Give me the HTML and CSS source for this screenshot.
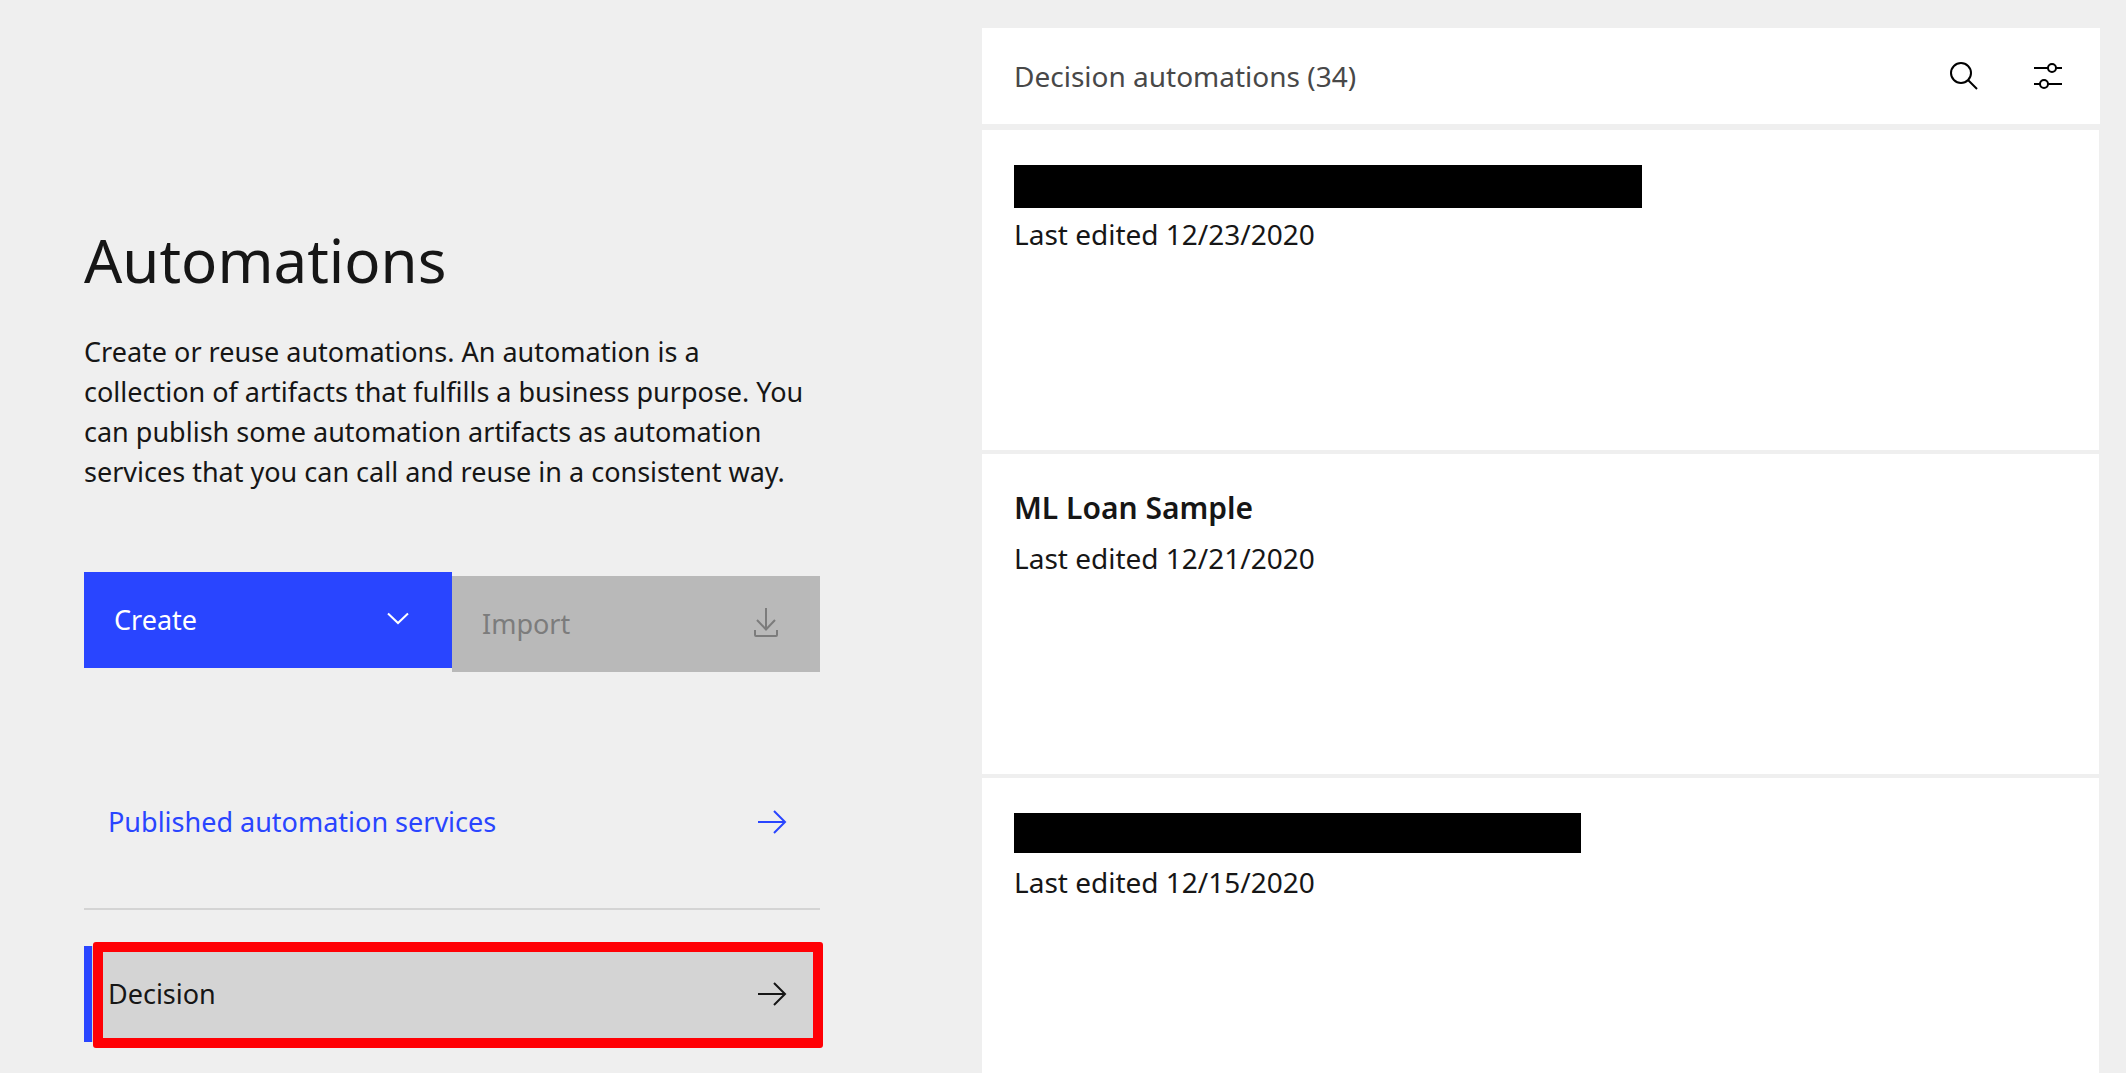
FILE: index.html
```html
<!DOCTYPE html>
<html lang="en">
<head>
<meta charset="utf-8">
<meta name="viewport" content="width=device-width, initial-scale=1">
<title>Automations</title>
<link rel="stylesheet" href="styles.css">
</head>
<body>
<main class="page">
  <section class="intro">
    <h1 class="title">Automations</h1>
    <p class="description">Create or reuse automations. An automation is a collection of artifacts that fulfills a business purpose. You can publish some automation artifacts as automation services that you can call and reuse in a consistent way.</p>
    <div class="actions">
      <button class="button button-create" type="button">Create
        <svg class="icon" viewBox="0 0 32 32" aria-hidden="true"><path d="M6 9.500l10 9.500 10-9.500"/></svg>
      </button>
      <button class="button button-import" type="button" disabled>Import
        <svg class="icon" viewBox="0 0 32 32" aria-hidden="true"><path d="M16 0v21.500M7 12l9 9.500 9-9.500M5 22v5q0 1 1 1h20q1 0 1-1v-5"/></svg>
      </button>
    </div>
    <nav class="kinds">
      <a class="kind" href="#published">Published automation services
        <svg class="icon" viewBox="0 0 32 32" aria-hidden="true"><path d="M2 16h27M18 5l11 11-11 11"/></svg>
      </a>
      <hr class="divider">
      <a class="kind kind-selected" href="#decision" aria-current="page">Decision
        <svg class="icon" viewBox="0 0 32 32" aria-hidden="true"><path d="M2 16h27M18 5l11 11-11 11"/></svg>
        <span class="highlight"></span>
      </a>
    </nav>
  </section>
  <section class="results">
    <header class="toolbar">
      <h2 class="toolbar-title">Decision automations (34)</h2>
      <button class="icon-button" type="button" aria-label="Search">
        <svg class="icon" viewBox="0 0 32 32" aria-hidden="true"><circle cx="13" cy="13" r="10"/><path d="M20 20l9 9"/></svg>
      </button>
      <button class="icon-button" type="button" aria-label="Filter">
        <svg class="icon" viewBox="0 0 32 32" aria-hidden="true"><path d="M2 8h14M24 8h6M2 24h6M16 24h14"/><circle cx="20" cy="8" r="4"/><circle cx="12" cy="24" r="4"/></svg>
      </button>
    </header>
    <ul class="cards">
      <li class="card">
        <div class="card-name"><span class="redacted redacted-long"></span></div>
        <p class="card-date">Last edited 12/23/2020</p>
      </li>
      <li class="card">
        <h3 class="card-name">ML Loan Sample</h3>
        <p class="card-date">Last edited 12/21/2020</p>
      </li>
      <li class="card">
        <div class="card-name"><span class="redacted redacted-short"></span></div>
        <p class="card-date">Last edited 12/15/2020</p>
      </li>
    </ul>
  </section>
</main>
</body>
</html>
```
FILE: styles.css
```css
* {
  box-sizing: border-box;
}

body {
  margin: 0;
  background: #efefef;
  color: #161616;
  font-family: "Noto Sans", sans-serif;
  font-size: 27px;
  line-height: 40px;
}

h1, h2, h3, p, ul {
  margin: 0;
  padding: 0;
  font-weight: 400;
}

.page {
  display: grid;
  grid-template-columns: 736fr 1118fr;
  column-gap: 162px;
  height: 100vh;
  padding: 28px 26px 0 84px;
  overflow: hidden;
}

.intro {
  padding-top: 192px;
}

.title {
  font-size: 60px;
  line-height: 80px;
}

.description {
  margin-top: 32px;
}

.actions {
  display: flex;
  align-items: flex-start;
  margin-top: 80px;
}

.button {
  display: flex;
  flex: 1;
  align-items: center;
  justify-content: space-between;
  height: 96px;
  padding: 0 38px 0 30px;
  border: 0;
  font: inherit;
}

.button-create {
  background: #2945ff;
  color: #fff;
}

.button-import {
  margin-top: 4px;
  background: #b9b9b9;
  color: #7c7c7c;
}

.icon {
  display: block;
  flex: none;
  width: 32px;
  height: 32px;
  fill: none;
  stroke: currentColor;
  stroke-width: 2;
}

.kinds {
  margin-top: 102px;
}

.kind {
  position: relative;
  display: flex;
  align-items: center;
  justify-content: space-between;
  height: 96px;
  padding: 0 32px 0 16px;
  border-left: 8px solid transparent;
  color: #2945ff;
  text-decoration: none;
}

.kind-selected {
  border-color: #2945ff;
  background: #d4d4d4;
  color: #161616;
}

.divider {
  height: 2px;
  margin: 38px 0 36px;
  border: 0;
  background: #d4d4d4;
}

.highlight {
  position: absolute;
  inset: -4px -3px -6px 1px;
  border: 10px solid #ff0005;
  border-radius: 3px;
}

.toolbar {
  display: flex;
  align-items: center;
  gap: 52px;
  height: 96px;
  padding: 0 36px 0 32px;
  background: #fff;
}

.toolbar-title {
  flex: 1;
  color: #484848;
  font-size: 28px;
}

.icon-button {
  padding: 0;
  border: 0;
  background: none;
  color: #000;
}

.cards {
  display: grid;
  gap: 4px;
  margin: 6px 1px 0 0;
  list-style: none;
}

.card {
  height: 320px;
  padding: 32px;
  background: #fff;
}

.card-name {
  height: 48px;
  font-size: 30px;
  font-weight: 600;
  line-height: 44px;
}

.card-date {
  margin-top: 4px;
  font-size: 28px;
}

.redacted {
  display: block;
  background: #000;
}

.redacted-long {
  width: 628px;
  height: 43px;
}

.redacted-short {
  width: 567px;
  height: 40px;
}

.card-name:has(.redacted) {
  padding-top: 3px;
}
```
